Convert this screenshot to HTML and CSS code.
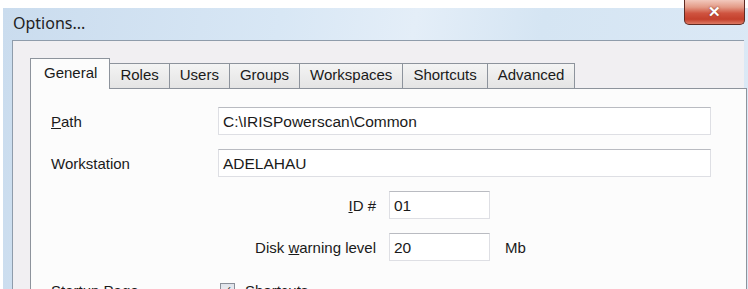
FILE: index.html
```html
<!DOCTYPE html>
<html lang="en">
<head>
    <meta charset="UTF-8">
    <title>Options...</title>
    <link rel="stylesheet" href="styles.css">
</head>
<body>
    <div class="window">
        <div class="titlebar">
            <span class="title">Options...</span>
            <button class="close-btn">&#x2715;</button>
        </div>

        <div class="client">
            <div class="tabs">
                <div class="tab active">General</div>
                <div class="tab">Roles</div>
                <div class="tab">Users</div>
                <div class="tab">Groups</div>
                <div class="tab">Workspaces</div>
                <div class="tab">Shortcuts</div>
                <div class="tab">Advanced</div>
            </div>

            <div class="panel">
                <div class="row">
                    <label class="label"><u>P</u>ath</label>
                    <div class="field wide">C:\IRISPowerscan\Common</div>
                </div>
                <div class="row">
                    <label class="label">Workstation</label>
                    <div class="field wide">ADELAHAU</div>
                </div>
                <div class="row">
                    <label class="label right"><u>I</u>D #</label>
                    <div class="field short">01</div>
                </div>
                <div class="row">
                    <label class="label right">Disk <u>w</u>arning level</label>
                    <div class="field short">20</div>
                    <span class="unit">Mb</span>
                </div>
                <div class="row startup">
                    <label class="label">Startup Page</label>
                    <span class="check">
                        <span class="box">&#x2713;</span>
                        Shortcuts
                    </span>
                </div>
            </div>
        </div>
    </div>
</body>
</html>
```

FILE: styles.css
```css
body {
    margin: 0;
    background: #ffffff;
    font-family: "Liberation Sans", Arial, sans-serif;
    font-size: 15px;
    color: #1a1a1a;
    overflow: hidden;
}
.window {
    margin: 8px 0 0 3px;
    height: 300px;
    padding: 0 4px 0 9px;
    background: linear-gradient(100deg, #cadcee 0%, #d8e7f5 35%, #e4eef8 52%, #d5e5f3 68%, #dce9f6 100%);
}
.titlebar {
    height: 32px;
    display: flex;
    align-items: center;
    justify-content: space-between;
}
.title {
    font-family: "Noto Sans", sans-serif;
    font-size: 16px;
    color: #222;
    margin-left: 1px;
    margin-top: -3px;
}
.close-btn {
    align-self: flex-start;
    margin-top: -8px;
    margin-right: -1px;
    width: 61px;
    height: 25px;
    border: 1px solid #5e2a22;
    border-top: none;
    border-radius: 0 0 5px 5px;
    background: linear-gradient(#f2c9bd 0%, #e39a86 30%, #cf5440 55%, #c4402c 80%, #dd7a64 100%);
    color: #ffffff;
    font-size: 15px;
    font-weight: bold;
    padding: 0;
    line-height: 22px;
    text-shadow: 0 0 2px #7a2a1c;
}
.client {
    height: 260px;
    background: #f1eff2;
    border-top: 1px solid #8f9cab;
    border-left: 1px solid #8f9cab;
    padding: 17px 0 0 17px;
}
.tabs {
    display: flex;
    align-items: flex-end;
    height: 30px;
    position: relative;
    z-index: 1;
}
.tab {
    height: 24px;
    line-height: 22px;
    padding: 0 10px;
    border: 1px solid #8d939c;
    border-bottom: none;
    margin-left: -1px;
    background: linear-gradient(#f4f4f4, #e4e4e4);
}
.tab.active {
    height: 30px;
    line-height: 28px;
    margin-left: 0;
    padding: 0 12px 0 13px;
    background: #fcfcfc;
    margin-bottom: -1px;
    z-index: 2;
}
.panel {
    width: 695px;
    height: 210px;
    background: #fcfcfc;
    border: 1px solid #8d939c;
    padding: 18px 0 0 20px;
}
.row {
    display: flex;
    align-items: center;
    margin-bottom: 14px;
}
.row.startup {
    margin-top: 21px;
}
.label {
    width: 167px;
}
.label.right {
    width: 325px;
    text-align: right;
    margin-right: 13px;
}
.field {
    box-sizing: border-box;
    height: 28px;
    line-height: 27px;
    padding: 0 4px;
    background: #ffffff;
    border: 1px solid #dedfe4;
    border-top-color: #b9bbc1;
    font-size: 15.5px;
}
.field.wide {
    width: 493px;
}
.field.short {
    width: 101px;
}
.unit {
    margin-left: 15px;
}
.check {
    display: flex;
    align-items: center;
    gap: 10px;
    margin-left: 2px;
}
.box {
    width: 13px;
    height: 13px;
    border: 1px solid #8a8f99;
    background: linear-gradient(#dfe3ea, #f4f6f9);
    font-size: 11px;
    line-height: 13px;
    text-align: center;
    color: #333;
}
```
